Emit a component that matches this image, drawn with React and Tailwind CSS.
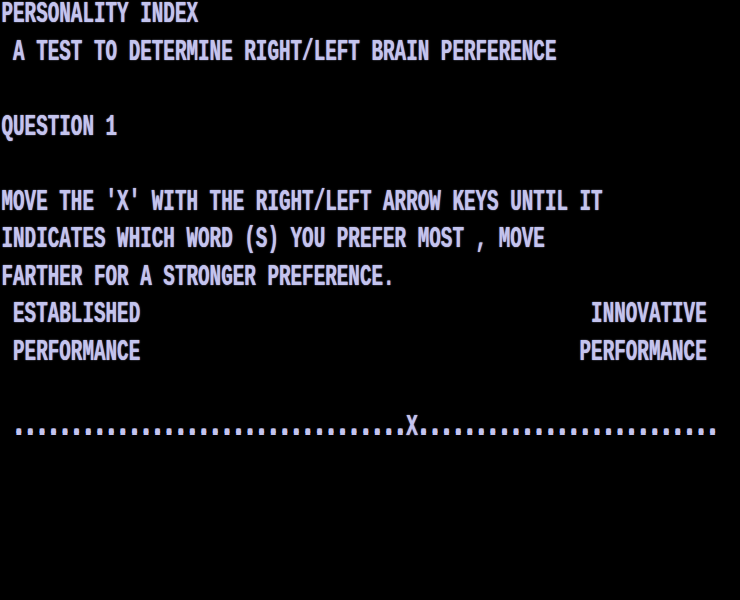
const lines = [
  'PERSONALITY INDEX',
  ' A TEST TO DETERMINE RIGHT/LEFT BRAIN PERFERENCE',
  '',
  'QUESTION 1',
  '',
  "MOVE THE 'X' WITH THE RIGHT/LEFT ARROW KEYS UNTIL IT",
  'INDICATES WHICH WORD (S) YOU PREFER MOST , MOVE',
  'FARTHER FOR A STRONGER PREFERENCE.',
  ' ESTABLISHED'.padEnd(51, ' ') + 'INNOVATIVE',
  ' PERFORMANCE'.padEnd(50, ' ') + 'PERFORMANCE',
  '',
  null,
  '',
  '',
  '',
  '',
]

const textClass =
  "origin-top scale-y-[1.57] whitespace-pre pl-[1.5px] text-[19.27px] leading-none font-bold text-[#c4c4ee] font-['Liberation_Mono',monospace] [text-shadow:0_0_1px_#c4c4ee]"

function DotsLine() {
  return (
    <div className="h-[37.5px]">
      <div className={textClass}>
        {' '}
        <span className="[text-shadow:1px_0_0_#c4c4ee,-1px_0_0_#c4c4ee,0_-1px_0_#c4c4ee,1px_-1px_0_#c4c4ee,-1px_-1px_0_#c4c4ee]">
          {'.'.repeat(34)}
        </span>
        X
        <span className="[text-shadow:1px_0_0_#c4c4ee,-1px_0_0_#c4c4ee,0_-1px_0_#c4c4ee,1px_-1px_0_#c4c4ee,-1px_-1px_0_#c4c4ee]">
          {'.'.repeat(26)}
        </span>
      </div>
    </div>
  )
}

function ScreenLine({ text }) {
  return (
    <div className="h-[37.5px]">
      <div className={textClass}>{text || ' '}</div>
    </div>
  )
}

export default function App() {
  return (
    <div className="w-[740px] h-[600px] bg-black overflow-hidden">
      {lines.map((line, i) =>
        line === null ? <DotsLine key={i} /> : <ScreenLine key={i} text={line} />
      )}
    </div>
  )
}
